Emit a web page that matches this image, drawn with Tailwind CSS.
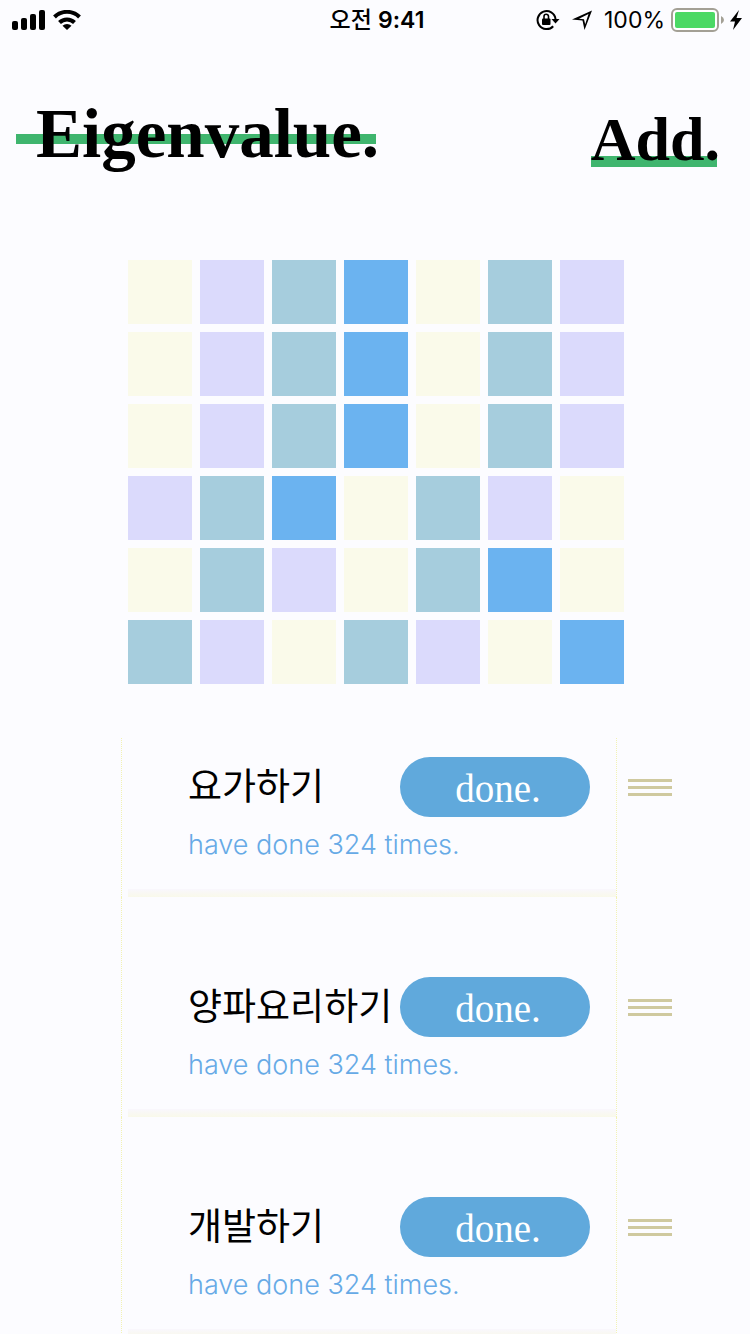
<!DOCTYPE html>
<html lang="ko">
<head>
<meta charset="utf-8">
<meta name="viewport" content="width=device-width, initial-scale=1">
<title>Eigenvalue.</title>
<script src="https://cdn.jsdelivr.net/npm/@tailwindcss/browser@4"></script>
</head>
<body class="flex h-screen flex-col overflow-hidden bg-[#fcfcff] font-['Inter','Noto_Sans_CJK_KR',sans-serif] text-black">
  <!-- Status bar -->
  <div class="grid h-10 shrink-0 grid-cols-3 items-center pr-2 pl-3">
    <div class="flex items-center gap-2">
      <svg class="h-5 w-[33px]" viewBox="0 0 33 20" aria-label="Signal"><rect y="11" width="6" height="9" rx="2"/><rect x="9" y="8" width="6" height="12" rx="2"/><rect x="18" y="4" width="6" height="16" rx="2"/><rect x="27" width="6" height="20" rx="2"/></svg>
      <svg class="h-5 w-7" viewBox="0 0 28 20" aria-label="Wi-Fi" fill="none" stroke="#000" stroke-width="4"><path d="M1.5 7a17.700 17.700 0 0 1 25 0M6.500 12.500a10.600 10.600 0 0 1 15 0"/><path d="M14 20l-4.500-4.300a6.500 6.500 0 0 1 9 0z" fill="#000" stroke="none"/></svg>
    </div>
    <p class="text-center text-[23px] leading-10 font-medium whitespace-nowrap">오전 <span class="font-semibold">9:41</span></p>
    <div class="flex items-center justify-end">
      <svg class="mr-3 h-[22px] w-6 shrink-0" viewBox="0 0 24 22" aria-label="Rotation lock"><path d="M17.200 17.200A9 9 0 1 1 19.500 10" fill="none" stroke="#000" stroke-width="2"/><path d="M15.500 10h8l-4 4.500z"/><rect x="6" y="9.500" width="8.500" height="6.500" rx="1"/><path d="M8 10V7.500a2.200 2.200 0 0 1 4.500 0V10" fill="none" stroke="#000" stroke-width="1.600"/></svg>
      <svg class="mr-3 h-5 w-5 shrink-0" viewBox="0 0 20 20" aria-label="Location"><path fill-rule="evenodd" d="M20 .500L12.500 20l-2-9.500L0 9.500zM16.500 4L7 8.800l5 .500 1.200 5z"/></svg>
      <span class="mr-1.5 text-[23px] leading-10">100%</span>
      <svg class="mr-1.5 h-6 w-[53px] shrink-0" viewBox="0 0 53 24" aria-label="Battery"><rect x="1" y="1" width="46" height="22" rx="5" fill="#fff" stroke="#a3a095" stroke-width="2"/><rect x="4" y="4" width="40" height="16" rx="2" fill="#4bd964"/><path d="M50 8q3 1.500 3 4t-3 4z" fill="#a3a095"/></svg>
      <svg class="h-5 w-3 shrink-0" viewBox="0 0 12 20" aria-label="Charging"><path d="M9 0L0 11.500h5L3 20l9-12H6.500z"/></svg>
    </div>
  </div>

  <header class="flex h-[220px] shrink-0 items-start justify-between pr-[30px] pl-4 font-['Liberation_Serif',serif] font-bold">
    <h1 class="mt-12 bg-linear-to-r from-[#3fb56e] to-[#3fb56e] bg-[length:360px_10px] bg-[position:0_46px] bg-no-repeat pl-5 text-[69px] leading-[92px] whitespace-nowrap">Eigenvalue.</h1>
    <button type="button" class="mt-[59px] bg-linear-to-r from-[#3fb56e] to-[#3fb56e] bg-[length:126px_11px] bg-[position:0_57px] bg-no-repeat text-[62px] leading-[80px] whitespace-nowrap">Add.</button>
  </header>

  <section id="tiles" aria-label="History" class="mx-auto grid shrink-0 grid-cols-7 gap-2 pl-0.5"></section>

  <ul id="habits" class="mt-[54px] pr-[78px] pl-[121px]"></ul>

<template id="habit">
  <li class="group flex items-stretch gap-[11px]">
    <article class="min-w-0 flex-1 border-x border-dotted border-[#f2f2b4]">
      <div class="pt-20 pr-[26px] pb-6 pl-[66px] group-first:pt-[19px]">
        <div class="flex h-[60px] items-center justify-between">
          <h2 class="text-[37px] leading-[60px] font-normal whitespace-nowrap"></h2>
          <button type="button" class="h-[60px] w-[190px] shrink-0 rounded-full bg-[#60a9dc] pt-1 pr-0 pl-1.5 font-['Liberation_Serif',serif] text-[39px] leading-[56px] text-white">done.</button>
        </div>
        <p class="mt-2 text-[27px] leading-10 font-light text-[#66aae6]">have done 324 times.</p>
      </div>
      <div class="ml-1.5 h-2 bg-linear-to-b from-[#f9f7fd] to-[#f9f9ea]"></div>
    </article>
    <button type="button" aria-label="Reorder" class="flex w-11 flex-col gap-1 self-start pt-[102px] group-first:pt-[41px]">
      <span class="h-[3px] w-full bg-[#cfc99f]"></span><span class="h-[3px] w-full bg-[#cfc99f]"></span><span class="h-[3px] w-full bg-[#cfc99f]"></span>
    </button>
  </li>
</template>
<script>
  const colors = { y: 'bg-[#fafaea]', p: 'bg-[#dbdafc]', t: 'bg-[#a6cddd]', b: 'bg-[#6bb3f0]' };
  const rows = ['yptbytp', 'yptbytp', 'yptbytp', 'ptbytpy', 'ytpytby', 'tpytpyb'];
  const tiles = document.getElementById('tiles');
  for (const key of rows.join('')) {
    const tile = document.createElement('div');
    tile.className = 'size-16 ' + colors[key];
    tiles.append(tile);
  }
  const template = document.getElementById('habit');
  for (const name of ['요가하기', '양파요리하기', '개발하기']) {
    const item = template.content.cloneNode(true);
    item.querySelector('h2').textContent = name;
    document.getElementById('habits').append(item);
  }
</script>
</body>
</html>
